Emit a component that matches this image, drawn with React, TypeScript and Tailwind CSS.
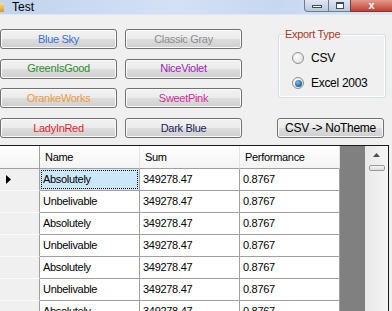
import React from 'react';

const btn =
  'h-[20px] rounded-[3px] border border-[#707070] bg-[linear-gradient(#f2f2f2_0%,#ebebeb_50%,#dddddd_51%,#cfcfcf_100%)] shadow-[inset_0_0_0_1px_#fbfbfb] text-[11px] tracking-[-0.3px] leading-none flex items-center justify-center';

const themes: { label: string; color: string }[] = [
  { label: 'Blue Sky', color: 'text-[#3b6fd6]' },
  { label: 'Classic Gray', color: 'text-[#8c8c8c]' },
  { label: 'GreenIsGood', color: 'text-[#2f8a2f]' },
  { label: 'NiceViolet', color: 'text-[#9a1fb2]' },
  { label: 'OrankeWorks', color: 'text-[#ee9a3c]' },
  { label: 'SweetPink', color: 'text-[#d0319a]' },
  { label: 'LadyInRed', color: 'text-[#e21f2c]' },
  { label: 'Dark Blue', color: 'text-[#1b1b5c]' },
];

const rows = Array.from({ length: 7 }, (_, i) => ({
  name: i % 2 === 0 ? 'Absolutely' : 'Unbelivable',
  sum: '349278.47',
  perf: '0.8767',
}));

const cell =
  'h-[22px] border-r border-b border-[#a0a0a0] bg-white flex items-center pl-[3px] text-[11px] tracking-[-0.3px] text-black';

function Radio({ checked }: { checked?: boolean }) {
  return (
    <span className="w-[12px] h-[12px] rounded-full border border-[#8f8f8f] bg-[radial-gradient(circle_at_35%_35%,#ffffff,#d9d9d9)] flex items-center justify-center">
      {checked && (
        <span className="w-[7px] h-[7px] rounded-full bg-[radial-gradient(circle_at_40%_35%,#7ec0ee,#1d5d93_70%)]" />
      )}
    </span>
  );
}

export default function App() {
  return (
    <div className="w-[392px] h-[311px] overflow-hidden bg-[#f0f0f0] font-['Liberation_Sans',Arial,sans-serif] text-black">
      {/* title bar */}
      <div className="h-[15px] flex items-start bg-[linear-gradient(100deg,#c0d4ee_0%,#d3e1f4_45%,#c6d8ef_70%,#d9e5f5_100%)] border-b border-[#dfe7f2]">
        <span className="mt-[3px] w-[4px] h-[9px] bg-[linear-gradient(#f7e08a,#d49a2c)]" />
        <span className="ml-[8px] text-[12px] leading-[14px]">Test</span>
        <div className="ml-auto flex h-[12px]">
          <span className="w-[25px] h-[12px] rounded-bl-[4px] border border-t-0 border-[#6d7c93] bg-[linear-gradient(#dfe8f3,#b8c8dc)] flex items-center justify-center">
            <span className="w-[10px] h-[3px] border border-[#3f4a5c] bg-white mt-[2px]" />
          </span>
          <span className="w-[21px] h-[12px] border-b border-[#6d7c93] bg-[linear-gradient(#dfe8f3,#b8c8dc)] flex items-center justify-center">
            <span className="w-[8px] h-[7px] border border-[#3f4a5c] border-t-2 bg-white" />
          </span>
          <span className="w-[42px] h-[12px] border-b border-l border-[#7a3a33] bg-[linear-gradient(#e19a8d,#c4412f)] flex items-center justify-center text-white text-[11px] font-bold leading-none">
            x
          </span>
        </div>
      </div>

      {/* buttons + export */}
      <div className="pt-[14px] grid grid-cols-[117px_117px_108px] gap-x-[8px] gap-y-[9.7px]">
        {themes.slice(0, 2).map((t) => (
          <div key={t.label} className={`${btn} ${t.color}`}>{t.label}</div>
        ))}
        <fieldset className="row-span-3 ml-[28px] -mt-[1px] h-[70px] w-[108px] rounded-[3px] border border-[#d5dfe5] shadow-[inset_0_0_0_1px_#fff]">
          <legend className="ml-[5px] px-[1px] text-[11px] tracking-[-0.3px] text-[#a8362a] leading-[12px]">
            Export Type
          </legend>
          <div className="mt-[11px] pl-[13px] flex items-center gap-[7px] h-[14px] text-[12px] tracking-[-0.2px]">
            <Radio />
            <span>CSV</span>
          </div>
          <div className="mt-[11px] pl-[13px] flex items-center gap-[7px] h-[14px] text-[12px] tracking-[-0.3px]">
            <Radio checked />
            <span>Excel 2003</span>
          </div>
        </fieldset>
        {themes.slice(2, 6).map((t) => (
          <div key={t.label} className={`${btn} ${t.color}`}>{t.label}</div>
        ))}
        {themes.slice(6, 8).map((t) => (
          <div key={t.label} className={`${btn} ${t.color}`}>{t.label}</div>
        ))}
        <div className={`${btn} ml-[27px] w-[107px] text-[12px]`}>CSV -&gt; NoTheme</div>
      </div>

      {/* data grid */}
      <div className="mt-[7px] w-[389px] h-[200px] border-t border-r border-[#1a1a1a] flex">
        <div className="grid grid-cols-[40px_100px_100px_100px] content-start">
          <div className="h-[23px] border-r border-b border-[#a0a0a0] bg-[linear-gradient(#ffffff,#f4f4f4)]" />
          {['Name', 'Sum', 'Performance'].map((h) => (
            <div
              key={h}
              className="h-[23px] border-r border-b border-r-[#e3e3e3] border-b-[#a0a0a0] bg-[linear-gradient(#ffffff,#f4f4f4)] flex items-center pl-[5px] text-[11px] tracking-[-0.3px]"
            >
              {h}
            </div>
          ))}
          {rows.map((r, i) => (
            <React.Fragment key={i}>
              <div className="h-[22px] border-r border-r-[#a0a0a0] border-b border-b-[#fafafa] bg-[#f0f0f0] flex items-center pl-[6px]">
                {i === 0 && (
                  <svg width="5" height="9" viewBox="0 0 5 9">
                    <polygon points="0,0 5,4.5 0,9" fill="#000" />
                  </svg>
                )}
              </div>
              {i === 0 ? (
                <div className="h-[22px] border-r border-b border-[#a0a0a0] bg-[#cce7f7] p-[1px]">
                  <div className="h-full border border-dotted border-black flex items-center pl-[1px] text-[11px] tracking-[-0.3px]">
                    {r.name}
                  </div>
                </div>
              ) : (
                <div className={cell}>{r.name}</div>
              )}
              <div className={cell}>{r.sum}</div>
              <div className={cell}>{r.perf}</div>
            </React.Fragment>
          ))}
        </div>
        <div className="w-[25px] bg-[#808080]" />
        <div className="w-[23px] bg-[linear-gradient(90deg,#e8e8e8,#f5f5f5)] flex flex-col items-center">
          <svg className="mt-[7px]" width="7" height="4" viewBox="0 0 7 4">
            <polygon points="0,4 3.5,0 7,4" fill="#4d4d4d" />
          </svg>
          <span className="mt-[8px] w-[16px] h-[6px] rounded-[2px] border border-[#9a9a9a] bg-[linear-gradient(#f6f6f6,#dcdcdc)]" />
        </div>
      </div>
    </div>
  );
}
